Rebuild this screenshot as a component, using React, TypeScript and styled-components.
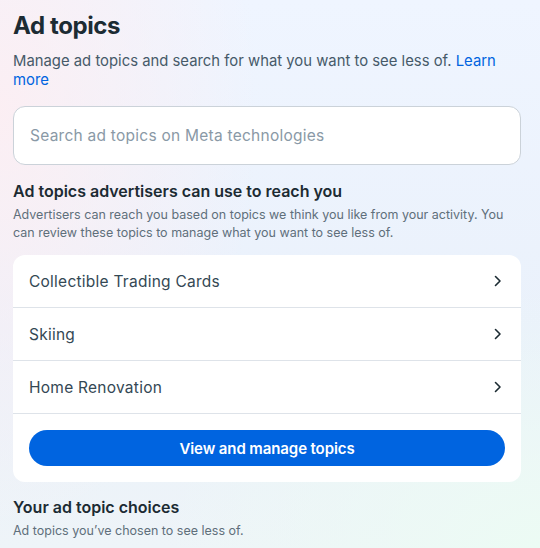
import * as React from 'react'
import styled, { createGlobalStyle } from 'styled-components'

const GlobalStyle = createGlobalStyle`
  * {
    box-sizing: border-box;
  }
  html, body {
    margin: 0;
    padding: 0;
  }
  body {
    font-family: Inter, Roboto, 'Noto Sans', sans-serif;
    color: #1c2b33;
  }
`

const Page = styled.div`
  width: 540px;
  height: 548px;
  overflow: hidden;
  padding: 12px 19px 0 13px;
  background:
    radial-gradient(ellipse 260px 420px at 0% 20%, rgba(253, 238, 242, 0.9), rgba(253, 238, 242, 0) 100%),
    radial-gradient(ellipse 380px 260px at 100% 100%, rgba(236, 251, 244, 1), rgba(236, 251, 244, 0) 100%),
    linear-gradient(180deg, #eff5ff 0%, #eaf1fb 60%, #eef4f8 100%);
`

const Title = styled.h1`
  margin: 0;
  font-size: 24px;
  line-height: 28px;
  font-weight: 700;
  letter-spacing: -0.4px;
  color: #1c2b33;
`

const Lead = styled.p`
  margin: 12px 0 0;
  font-size: 14.85px;
  line-height: 19px;
  color: #465a69;
`

const Link = styled.a`
  color: #0064e0;
  text-decoration: none;
`

const Search = styled.input`
  display: block;
  width: 100%;
  height: 59px;
  margin-top: 16px;
  padding: 0 16px;
  border: 1px solid #cbd2d9;
  border-radius: 12px;
  background: #fff;
  font-family: inherit;
  font-size: 15.5px;
  letter-spacing: 0.25px;
  color: #1c2b33;
  outline: none;

  &::placeholder {
    color: #8a99a6;
  }
`

const SectionTitle = styled.h2`
  margin: ${p => (p.$top ? p.$top : 16)}px 0 0;
  font-size: 16px;
  line-height: 22px;
  font-weight: 600;
  color: #1c2b33;
`

const SectionText = styled.p`
  margin: 4px 0 0;
  font-size: 12.5px;
  line-height: 18px;
  color: #5f6f7b;
`

const Card = styled.div`
  margin-top: 13px;
  background: #fff;
  border-radius: 12px;
  overflow: hidden;
`

const Row = styled.div`
  display: flex;
  align-items: center;
  justify-content: space-between;
  height: 53px;
  padding: 0 17px 0 16px;
  border-bottom: 1px solid #dee3e9;
  font-size: 15.5px;
  letter-spacing: 0.25px;
  color: #344854;
`

const Footer = styled.div`
  padding: 16px 16px 16px;
`

const Button = styled.button`
  display: block;
  width: 100%;
  height: 36px;
  border: none;
  border-radius: 18px;
  background: #0064e0;
  color: #fff;
  font-family: inherit;
  font-size: 15px;
  font-weight: 600;
  letter-spacing: -0.1px;
  cursor: pointer;
`

const Chevron = () => (
  <svg width="12" height="12" viewBox="0 0 12 12" fill="none">
    <path d="M3.5 1.5 L8 6 L3.5 10.5" stroke="#1c2b33" strokeWidth="1.6" strokeLinecap="round" strokeLinejoin="round" />
  </svg>
)

const topics = ['Collectible Trading Cards', 'Skiing', 'Home Renovation']

export default function App() {
  return (
    <Page>
      <GlobalStyle />
      <Title>Ad topics</Title>
      <Lead>
        Manage ad topics and search for what you want to see less of. <Link href="#">Learn more</Link>
      </Lead>
      <Search placeholder="Search ad topics on Meta technologies" />

      <SectionTitle $top={15}>Ad topics advertisers can use to reach you</SectionTitle>
      <SectionText>
        Advertisers can reach you based on topics we think you like from your activity. You can review these topics to manage what you want to see less of.
      </SectionText>

      <Card>
        {topics.map(t => (
          <Row key={t}>
            <span>{t}</span>
            <Chevron />
          </Row>
        ))}
        <Footer>
          <Button>View and manage topics</Button>
        </Footer>
      </Card>

      <SectionTitle $top={14}>Your ad topic choices</SectionTitle>
      <SectionText>Ad topics you’ve chosen to see less of.</SectionText>
    </Page>
  )
}
